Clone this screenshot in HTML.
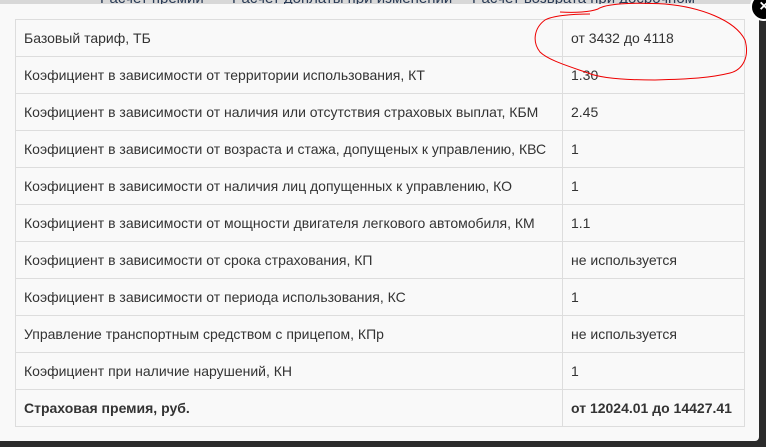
<!DOCTYPE html>
<html><head><meta charset="utf-8"><style>
html,body{margin:0;padding:0;width:766px;height:447px;overflow:hidden;background:#2b2b2b;font-family:"Liberation Sans",Arial,sans-serif;}
.top{position:absolute;left:0;top:0;width:766px;height:6px;background:#d8d8d8;overflow:hidden}
.top span{position:absolute;top:-10px;font-size:15px;color:#2a3b55}
.modal{position:absolute;left:0;top:4px;width:759px;height:437px;background:#f9f9f9;border-radius:0 4px 4px 0}
table{position:absolute;left:15px;top:15px;width:730px;border-collapse:collapse;font-size:14px;color:#333}
td{border:1px solid #ddd;height:36px;padding:0 0 0 8px;vertical-align:middle;line-height:20px}
td:first-child{width:538px}
b{font-weight:bold}
.close{position:absolute;left:750px;top:-7px;width:24px;height:24px;border-radius:50%;background:#000;border:2px solid #fff;color:#fff;font-size:16px;font-weight:bold;text-align:center;line-height:24px}
svg{position:absolute;left:0;top:0}
</style></head><body>
<div class="top"><span style="left:100px">Расчет премии</span><span style="left:232px">Расчет доплаты при изменении</span><span style="left:472px">Расчет возврата при досрочном прекращении</span></div>
<div class="modal">
<table>
<tr><td>Базовый тариф, ТБ</td><td>от 3432 до 4118</td></tr>
<tr><td>Коэфициент в зависимости от территории использования, КТ</td><td>1.30</td></tr>
<tr><td>Коэфициент в зависимости от наличия или отсутствия страховых выплат, КБМ</td><td>2.45</td></tr>
<tr><td>Коэфициент в зависимости от возраста и стажа, допущеных к управлению, КВС</td><td>1</td></tr>
<tr><td>Коэфициент в зависимости от наличия лиц допущенных к управлению, КО</td><td>1</td></tr>
<tr><td>Коэфициент в зависимости от мощности двигателя легкового автомобиля, КМ</td><td>1.1</td></tr>
<tr><td>Коэфициент в зависимости от срока страхования, КП</td><td>не используется</td></tr>
<tr><td>Коэфициент в зависимости от периода использования, КС</td><td>1</td></tr>
<tr><td>Управление транспортным средством с прицепом, КПр</td><td>не используется</td></tr>
<tr><td>Коэфициент при наличие нарушений, КН</td><td>1</td></tr>
<tr><td><b>Страховая премия, руб.</b></td><td><b>от 12024.01 до 14427.41</b></td></tr>
</table>
</div>
<svg width="766" height="447"><path d="M560,12 C575,13 590,12 598,9 C605,4 630,2 665,4 C700,7 735,20 745,40 C750,58 742,70 730,73 C710,78 690,79 655,80 C625,80 600,78 588,73 C568,66 548,60 540,52 C532,42 534,28 545,20 C552,16 570,14 590,14" fill="none" stroke="#e00" stroke-width="1"/></svg>
<div class="close">×</div>
</body></html>
